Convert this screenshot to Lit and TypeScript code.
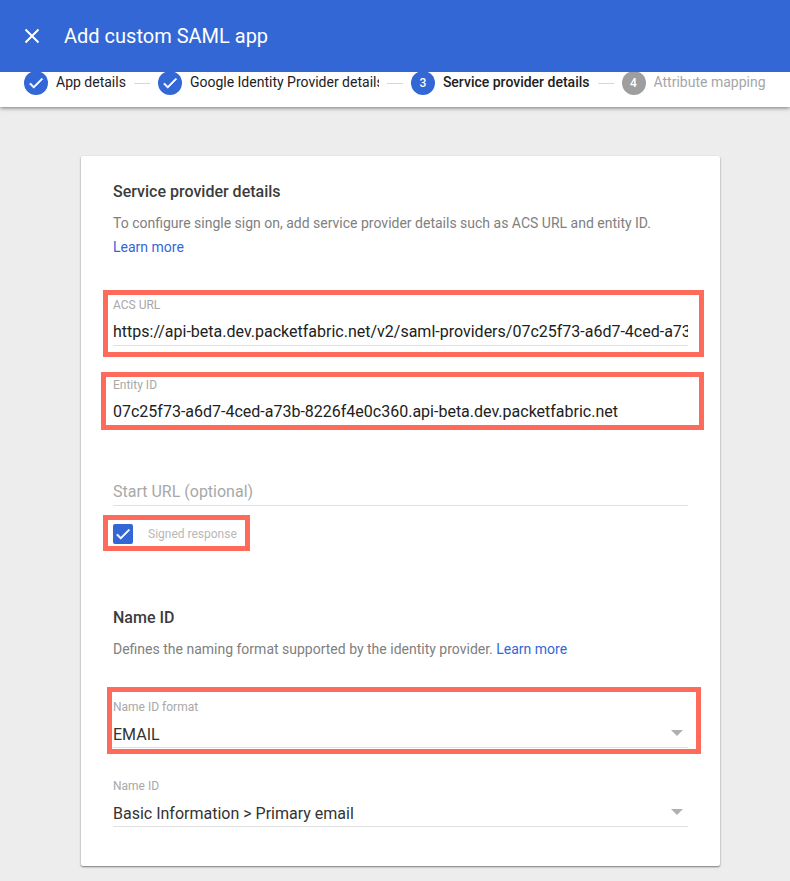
import { LitElement, html, css, svg, nothing } from "lit";
import { customElement, property } from "lit/decorators.js";
import { classMap } from "lit/directives/class-map.js";

interface Step {
  label: string;
  state: "done" | "current" | "upcoming";
}

const steps: Step[] = [
  { label: "App details", state: "done" },
  { label: "Google Identity Provider details", state: "done" },
  { label: "Service provider details", state: "current" },
  { label: "Attribute mapping", state: "upcoming" },
];

const check = svg`<path d="M9 16.2 4.8 12l-1.4 1.4L9 19 21 7l-1.4-1.4z" fill="#fff" stroke="#fff" stroke-width="0.8" />`;

@customElement("step-bar")
export class StepBar extends LitElement {
  @property({ attribute: false }) steps: Step[] = [];

  static styles = css`
    :host {
      display: block;
    }
    .steps {
      display: flex;
      align-items: center;
      gap: 8px;
      margin: 0;
      padding: 0 24px 12px;
      list-style: none;
      background: #fff;
      box-shadow: 0 1px 4px rgba(0, 0, 0, 0.5);
    }
    .step {
      display: flex;
      align-items: center;
      gap: 8px;
      min-width: 0;
      color: #212121;
      font-size: 14px;
      line-height: 24px;
    }
    .rule {
      flex: none;
      width: 16px;
      height: 1px;
      background: #d6d6d6;
    }
    .dot {
      flex: none;
      display: grid;
      place-items: center;
      width: 24px;
      height: 24px;
      border-radius: 50%;
      background: #3367d6;
      color: #fff;
      font-size: 12px;
      font-weight: 500;
    }
    .label {
      max-width: 189px;
      padding-bottom: 2px;
      line-height: 22px;
      overflow: hidden;
      white-space: nowrap;
    }
    .current .label {
      font-weight: 500;
    }
    .upcoming .dot {
      background: #9e9e9e;
    }
    .upcoming .label {
      color: #a6a6a6;
    }
  `;

  render() {
    return html`<ol class="steps">
      ${this.steps.map(
        (s, i) => html`<li
          class=${classMap({ step: true, [s.state]: true })}
          aria-current=${s.state === "current" ? "step" : nothing}
        >
          ${i ? html`<span class="rule"></span>` : nothing}
          <span class="dot"
            >${s.state === "done"
              ? html`<svg width="18" height="18" viewBox="0 0 24 24">${check}</svg>`
              : i + 1}</span
          >
          <span class="label">${s.label}</span>
        </li>`
      )}
    </ol>`;
  }
}

@customElement("app-root")
export class AppRoot extends LitElement {
  static styles = css`
    :host {
      display: block;
      box-sizing: border-box;
      min-height: 100vh;
      background: #ededed;
      font-family: Roboto, "Liberation Sans", sans-serif;
      color: #212121;
    }
    .bar {
      position: relative;
      z-index: 1;
      display: flex;
      align-items: center;
      gap: 24px;
      height: 72px;
      padding: 0 24px;
      box-sizing: border-box;
      background: #3367d6;
      color: #fff;
    }
    .close {
      display: block;
      width: 16px;
      height: 16px;
      padding: 0;
      border: 0;
      background: none;
      color: inherit;
    }
    .close svg {
      display: block;
    }
    .title {
      margin: 0;
      font-size: 20px;
      font-weight: 400;
      line-height: 24px;
    }
    .progress {
      margin-top: -1px;
    }
    .page {
      padding: 49px 70px 14px 81px;
    }
    .card {
      padding: 23px 32px 39px;
      border-radius: 2px;
      background: #fff;
      box-shadow: 0 1px 2px rgba(0, 0, 0, 0.5);
    }
    .heading {
      margin: 0 0 6px;
      font-size: 16px;
      font-weight: 500;
      line-height: 26px;
      color: #3c3c3c;
    }
    .text {
      margin: 0;
      font-size: 14px;
      line-height: 24px;
      color: #808080;
    }
    .link {
      color: #3367d6;
      text-decoration: none;
    }
    .fields {
      display: grid;
      gap: 30px;
      margin-top: 38px;
    }
    .fields.urls {
      gap: 31px;
    }
    .field {
      position: relative;
      display: grid;
      gap: 6px;
    }
    .caption {
      font-size: 12px;
      line-height: 16px;
      color: #a8a8a8;
    }
    .caption.empty {
      height: 16px;
    }
    .control {
      appearance: none;
      box-sizing: border-box;
      width: 100%;
      height: 27px;
      margin: 0;
      padding: 0 0 2px;
      border: 0;
      border-bottom: 1px solid #e0e0e0;
      border-radius: 0;
      outline: 0;
      background: transparent;
      color: #212121;
      font: 400 16px/24px Roboto, "Liberation Sans", sans-serif;
    }
    select.control {
      padding: 2px 0 0;
      color: #333;
    }
    .control::placeholder {
      color: #a8a8a8;
      opacity: 1;
    }
    .arrow {
      position: absolute;
      right: 5px;
      bottom: 12px;
      pointer-events: none;
    }
    .mark {
      position: absolute;
      border: 5px solid #ff6b5b;
      pointer-events: none;
    }
    .mark.acs {
      inset: -7px -16px -11px -10px;
    }
    .mark.entity {
      inset: -5px -16px -4px -12px;
    }
    .mark.signed {
      inset: -9px -13px -7px -10px;
    }
    .mark.format {
      inset: -12px -13px -6px -6px;
    }
    .option {
      position: relative;
      display: flex;
      align-items: center;
      gap: 15px;
      width: fit-content;
      margin: 18px 0 61px;
    }
    .box {
      appearance: none;
      width: 20px;
      height: 20px;
      margin: 0;
      border-radius: 2px;
      background: #fff;
      box-shadow: inset 0 0 0 2px #757575;
    }
    .box:checked {
      background: #3367d6;
      box-shadow: none;
    }
    .tick {
      position: absolute;
      left: 1px;
      top: 1px;
      pointer-events: none;
    }
    .box:not(:checked) + .tick {
      display: none;
    }
    .option .caption {
      color: #b8b8b8;
    }
  `;

  private arrow() {
    return html`<svg class="arrow" width="12" height="6" viewBox="0 0 12 6">
      <path d="M0 0h12L6 6z" fill="#b0b0b0" />
    </svg>`;
  }

  render() {
    return html`
      <header class="bar">
        <button class="close" type="button" aria-label="Close">
          <svg width="16" height="16" viewBox="0 0 16 16">
            <path d="M1.5 1.5l13 13M14.5 1.5l-13 13" stroke="#fff" stroke-width="2" />
          </svg>
        </button>
        <h1 class="title">Add custom SAML app</h1>
      </header>
      <step-bar class="progress" .steps=${steps}></step-bar>
      <main class="page">
        <form class="card">
          <h2 class="heading">Service provider details</h2>
          <p class="text">
            To configure single sign on, add service provider details such as ACS URL and entity ID.
            <a class="link" href="#sso">Learn more</a>
          </p>
          <div class="fields urls">
            <div class="field">
              <label class="caption" for="acs">ACS URL</label>
              <input
                class="control"
                id="acs"
                value="https://api-beta.dev.packetfabric.net/v2/saml-providers/07c25f73-a6d7-4ced-a73b-8226f4e0c360"
              />
              <span class="mark acs"></span>
            </div>
            <div class="field">
              <label class="caption" for="entity">Entity ID</label>
              <input
                class="control"
                id="entity"
                value="07c25f73-a6d7-4ced-a73b-8226f4e0c360.api-beta.dev.packetfabric.net"
              />
              <span class="mark entity"></span>
            </div>
            <div class="field">
              <span class="caption empty"></span>
              <input
                class="control"
                aria-label="Start URL (optional)"
                placeholder="Start URL (optional)"
              />
            </div>
          </div>
          <div class="option">
            <input class="box" type="checkbox" id="signed" checked />
            <svg class="tick" width="18" height="18" viewBox="0 0 24 24">${check}</svg>
            <label class="caption" for="signed">Signed response</label>
            <span class="mark signed"></span>
          </div>
          <h2 class="heading">Name ID</h2>
          <p class="text">
            Defines the naming format supported by the identity provider.
            <a class="link" href="#name-id">Learn more</a>
          </p>
          <div class="fields">
            <div class="field">
              <label class="caption" for="format">Name ID format</label>
              <select class="control" id="format">
                <option>EMAIL</option>
              </select>
              ${this.arrow()}
              <span class="mark format"></span>
            </div>
            <div class="field">
              <label class="caption" for="name">Name ID</label>
              <select class="control" id="name">
                <option>Basic Information &gt; Primary email</option>
              </select>
              ${this.arrow()}
            </div>
          </div>
        </form>
      </main>
    `;
  }
}
